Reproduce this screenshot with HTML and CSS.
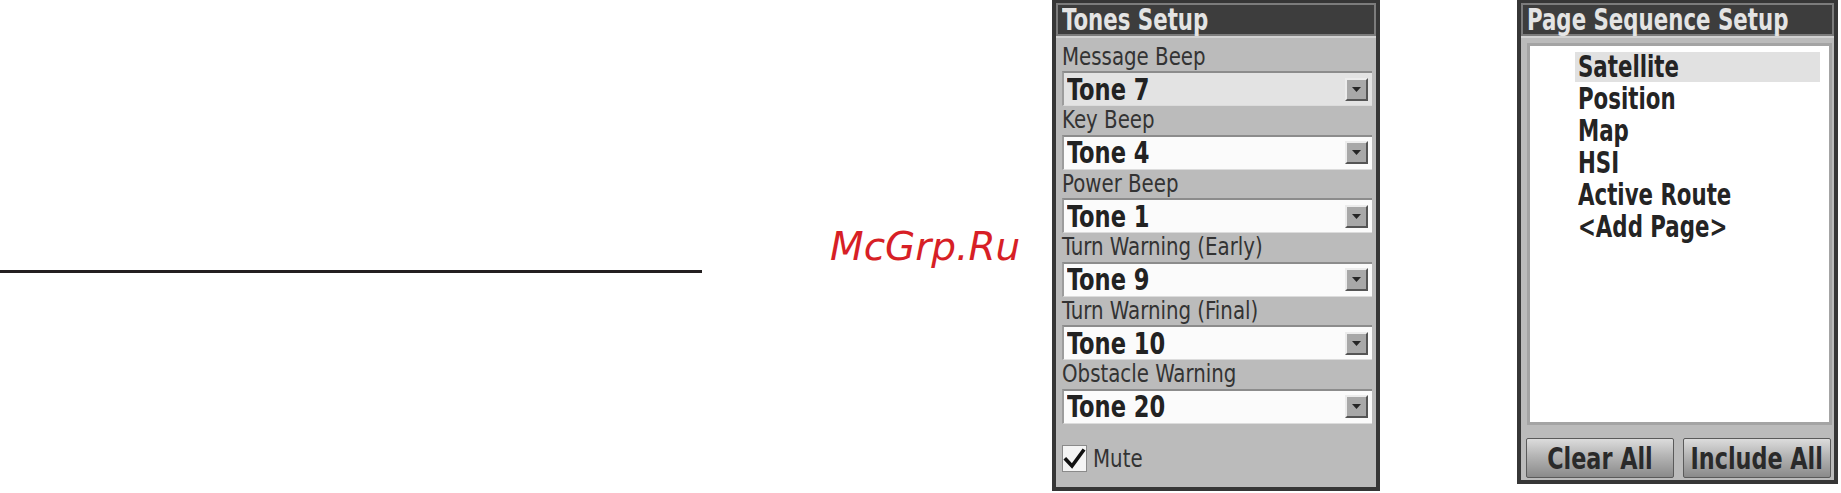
FILE: index.html
```html
<!DOCTYPE html>
<html>
<head>
<meta charset="utf-8">
<link rel="stylesheet" href="styles.css">
</head>
<body>
<div class="page">
  <div class="rule-col"><div class="rule"></div></div>
  <div class="mark">McGrp.Ru</div>

  <section class="panel tones">
    <header class="title"><span class="ttext">Tones Setup</span></header>
    <div class="tbody">
      <div class="field">
        <div class="label"><span class="ltext">Message Beep</span></div>
        <div class="select focus"><span class="val">Tone 7</span><span class="btn"><svg width="9" height="5" viewBox="0 0 9 5"><path d="M0 0H9L4.5 5Z" fill="#262626"/></svg></span></div>
      </div>
      <div class="field">
        <div class="label"><span class="ltext">Key Beep</span></div>
        <div class="select"><span class="val">Tone 4</span><span class="btn"><svg width="9" height="5" viewBox="0 0 9 5"><path d="M0 0H9L4.5 5Z" fill="#262626"/></svg></span></div>
      </div>
      <div class="field">
        <div class="label"><span class="ltext">Power Beep</span></div>
        <div class="select"><span class="val">Tone 1</span><span class="btn"><svg width="9" height="5" viewBox="0 0 9 5"><path d="M0 0H9L4.5 5Z" fill="#262626"/></svg></span></div>
      </div>
      <div class="field">
        <div class="label"><span class="ltext">Turn Warning (Early)</span></div>
        <div class="select"><span class="val">Tone 9</span><span class="btn"><svg width="9" height="5" viewBox="0 0 9 5"><path d="M0 0H9L4.5 5Z" fill="#262626"/></svg></span></div>
      </div>
      <div class="field">
        <div class="label"><span class="ltext">Turn Warning (Final)</span></div>
        <div class="select"><span class="val">Tone 10</span><span class="btn"><svg width="9" height="5" viewBox="0 0 9 5"><path d="M0 0H9L4.5 5Z" fill="#262626"/></svg></span></div>
      </div>
      <div class="field">
        <div class="label"><span class="ltext">Obstacle Warning</span></div>
        <div class="select"><span class="val">Tone 20</span><span class="btn"><svg width="9" height="5" viewBox="0 0 9 5"><path d="M0 0H9L4.5 5Z" fill="#262626"/></svg></span></div>
      </div>
      <div class="mute">
        <span class="check"><svg width="23" height="25" viewBox="0 0 23 25"><path d="M3 13.5L9 20L20 5" fill="none" stroke="#111" stroke-width="3.6" stroke-linecap="square"/></svg></span>
        <span class="mute-text">Mute</span>
      </div>
    </div>
  </section>

  <section class="panel pages">
    <header class="title"><span class="ttext">Page Sequence Setup</span></header>
    <div class="pbody">
      <div class="list">
        <div class="item sel"><span class="itext">Satellite</span></div>
        <div class="item"><span class="itext">Position</span></div>
        <div class="item"><span class="itext">Map</span></div>
        <div class="item"><span class="itext">HSI</span></div>
        <div class="item"><span class="itext">Active Route</span></div>
        <div class="item"><span class="itext">&lt;Add Page&gt;</span></div>
      </div>
      <div class="buttons">
        <div class="button"><span class="btext">Clear All</span></div>
        <div class="button"><span class="btext">Include All</span></div>
      </div>
    </div>
  </section>
</div>
</body>
</html>
```
FILE: styles.css
```css
html, body {
  margin: 0;
  padding: 0;
  background: #ffffff;
}
body {
  width: 1841px;
  height: 493px;
  overflow: hidden;
  font-family: "DejaVu Sans", "Liberation Sans", sans-serif;
  font-stretch: condensed;
}
.page {
  display: flex;
  align-items: flex-start;
  height: 493px;
}
.rule-col {
  width: 702px;
  flex: none;
  padding-top: 270px;
}
.rule {
  height: 3px;
  background: #231f20;
}
.mark {
  width: 350px;
  flex: none;
  box-sizing: border-box;
  padding-left: 128px;
  margin-top: 227px;
  font-family: "DejaVu Sans", sans-serif;
  font-stretch: normal;
  font-style: oblique;
  font-size: 39px;
  line-height: 40px;
  color: #d71f26;
}
.panel {
  flex: none;
  box-sizing: border-box;
  border: 4px solid #363636;
  border-top-width: 3px;
  background: #bbbbbb;
  display: flex;
  flex-direction: column;
}
.tones {
  width: 328px;
  height: 491px;
}
.pages {
  width: 321px;
  height: 484px;
  margin-left: 137px;
}
.title {
  height: 35px;
  box-sizing: border-box;
  background: #3d3d3d;
  box-shadow: inset 0 0 0 2px #7c7c7c;
  border-bottom: 2px solid #d2d2d2;
  color: #e4e4e4;
  font-weight: bold;
  font-size: 30px;
  line-height: 33px;
  padding-left: 6px;
  white-space: nowrap;
}
.ttext {
  display: inline-block;
  transform: scaleX(0.79);
  transform-origin: 0 50%;
}
.tbody {
  padding: 4.5px 4px 0 6px;
}
.label {
  height: 28.5px;
  line-height: 28.5px;
  font-size: 25px;
  color: #333333;
  white-space: nowrap;
}
.ltext {
  display: inline-block;
  transform: scaleX(0.88);
  transform-origin: 0 50%;
}
.select {
  height: 35px;
  box-sizing: border-box;
  border-top: 2px solid #8c8c8c;
  border-left: 2px solid #9c9c9c;
  border-bottom: 1px solid #dcdcdc;
  background: #fbfbfb;
  display: flex;
  align-items: center;
  justify-content: space-between;
  padding: 0 4px 0 3px;
}
.select.focus {
  background: #e3e3e3;
}
.val {
  display: inline-block;
  transform: scaleX(0.81);
  transform-origin: 0 50%;
  font-weight: bold;
  font-size: 31px;
  line-height: 33px;
  color: #222222;
  white-space: nowrap;
}
.btn {
  width: 23px;
  height: 23px;
  box-sizing: border-box;
  background: #a8a8a8;
  border: 2px solid;
  border-color: #ececec #555555 #555555 #ececec;
  display: flex;
  align-items: center;
  justify-content: center;
}
.mute {
  margin-top: 20px;
  display: flex;
  align-items: center;
}
.check {
  width: 25px;
  height: 27px;
  box-sizing: border-box;
  background: #f4f4f4;
  border: 1px solid #8a8a8a;
  display: flex;
  align-items: center;
  justify-content: center;
}
.mute-text {
  display: inline-block;
  margin-left: 6px;
  font-size: 25px;
  color: #333333;
  transform: scaleX(0.88);
  transform-origin: 0 50%;
}
.pbody {
  padding: 5px 0 0 6px;
}
.list {
  width: 305px;
  height: 382px;
  box-sizing: border-box;
  border: 3px solid #a4a4a4;
  background: #ffffff;
  padding-top: 6px;
}
.item {
  margin-left: 45px;
  width: 245px;
  height: 30px;
  margin-bottom: 2px;
  padding-left: 3px;
  box-sizing: border-box;
  font-weight: bold;
  font-size: 30px;
  line-height: 30px;
  color: #242424;
  white-space: nowrap;
}
.itext {
  display: inline-block;
  transform: scaleX(0.79);
  transform-origin: 0 50%;
}
.item.sel {
  background: #e1e1e1;
}
.buttons {
  display: flex;
  gap: 9px;
  margin-top: 13px;
  margin-left: -1px;
}
.button {
  width: 148px;
  height: 40px;
  box-sizing: border-box;
  border: 1px solid #5a5a5a;
  border-radius: 2px;
  background: linear-gradient(#dcdcdc, #b4b4b4 45%, #8a8a8a);
  display: flex;
  align-items: center;
  justify-content: center;
  font-weight: bold;
  font-size: 31px;
  color: #2a2a2a;
  white-space: nowrap;
}
.btext {
  display: inline-block;
  transform: scaleX(0.8);
  transform-origin: 50% 50%;
}
```
